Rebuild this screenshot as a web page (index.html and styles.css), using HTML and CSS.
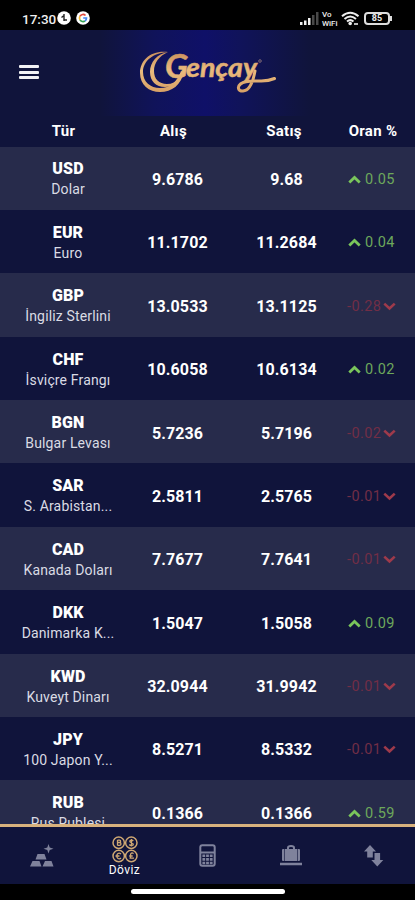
FILE: index.html
```
<!DOCTYPE html>
<html lang="tr">
<head>
    <meta charset="UTF-8">
    <meta name="viewport" content="width=device-width, initial-scale=1.0">
    <title>Gençay - Döviz</title>
    <link rel="stylesheet" href="styles.css">
</head>
<body>
    <svg class="defs" width="0" height="0">
        <symbol id="up" viewBox="0 0 12 8"><path d="M1.2 6.700 6 2.200l4.800 4.500" fill="none" stroke="currentColor" stroke-width="2.600"/></symbol>
        <symbol id="down" viewBox="0 0 12 8"><path d="M1.200 1.300 6 5.800l4.800-4.500" fill="none" stroke="currentColor" stroke-width="2.400"/></symbol>
    </svg>

    <div class="status-bar">
        <span class="time">17:30</span>
        <svg class="status-apps" width="34" height="14" viewBox="0 0 34 14">
            <circle cx="7" cy="7" r="6.800" fill="#fff"/>
            <path d="M7 3v7M4.500 6.500 7 4.500v4M7 9h3" fill="none" stroke="#222" stroke-width="1.400"/>
            <circle cx="26" cy="7" r="6.800" fill="#fff"/>
            <g fill="none" stroke-width="1.700">
                <path d="M28.500 4.500A3.500 3.500 0 0 0 23 5.200" stroke="#e2483c"/>
                <path d="M23 5.200a3.500 3.500 0 0 0 0 3.600" stroke="#f2b62d"/>
                <path d="M23 8.800a3.500 3.500 0 0 0 5 1.200" stroke="#36a455"/>
                <path d="M28 10a3.500 3.500 0 0 0 1.500-3H26.200" stroke="#4385f0"/>
            </g>
        </svg>
        <div class="status-right">
            <svg width="20" height="13" viewBox="0 0 20 13">
                <g fill="#f2f2f2"><rect x="0" y="10" width="2.500" height="3"/><rect x="4" y="8.500" width="2.500" height="4.500"/><rect x="8" y="6" width="2.500" height="7"/></g>
                <g fill="#494949"><rect x="12" y="3" width="2.500" height="10"/><rect x="16" y="0" width="2.500" height="13"/></g>
            </svg>
            <span class="vowifi">Vo<br>WiFi</span>
            <svg class="wifi" width="19" height="15" viewBox="0 0 19 15">
                <g fill="none" stroke="#eee" stroke-width="2">
                    <path d="M1 5.200Q9.200-1.800 17.500 5.200M3.500 8Q9.200 3 15 8M6 10.500Q9.200 7.800 12.500 10.500"/>
                    <path d="M13 13h4" stroke-width="1.600"/>
                </g>
                <circle cx="9.200" cy="12.500" r="1.800" fill="#eee"/>
            </svg>
            <span class="battery">85</span>
        </div>
    </div>

    <header class="header">
        <div class="menu"><span></span><span></span><span></span></div>
        <svg class="logo" width="155" height="60" viewBox="0 0 155 60">
            <defs>
                <linearGradient id="gold" x1="0" y1="0" x2="0" y2="60" gradientUnits="userSpaceOnUse">
                    <stop offset="0.200" stop-color="#c98f5c"/>
                    <stop offset="0.500" stop-color="#e9bb7e"/>
                    <stop offset="0.850" stop-color="#d9a267"/>
                </linearGradient>
            </defs>
            <!-- double crescent -->
            <g fill="url(#gold)">
                <path d="M38 12C21 10 10 20 10 33c0 12 9 19 20 19 12 0 21-7 24-20l-3-1c-4 11-11 17-21 17-9.500 0-17-6-17-16 0-11 10-19 25-20z"/>
                <path d="M38 12c-11 2-18 10-18 20 0 9 6 15 15 15 7 0 13-3 16-8l-2-1c-3 4-7 6-12 6-8 0-13-5-13-13 0-8 5-15 14-19z"/>
            </g>
            <path d="M125 31c-2 11-5 19.500-12 20-5 .2-6-4-2.500-7C115 40 122 41 130 41c6 .2 11-1 14.500-2.500" fill="none" stroke="url(#gold)" stroke-width="3" stroke-linecap="round"/>
            <g class="logo-text" fill="url(#gold)">
                <text x="35" y="38" font-size="33" textLength="23" lengthAdjust="spacingAndGlyphs">G</text>
                <text x="56" y="37" font-size="27" textLength="71" lengthAdjust="spacingAndGlyphs">ençay</text>
            </g>
            <circle cx="130" cy="21" r="1.300" fill="none" stroke="#a98a83" stroke-width=".7"/>
        </svg>
    </header>

    <table class="rates">
        <thead>
            <tr><th>Tür</th><th>Alış</th><th>Satış</th><th>Oran %</th></tr>
        </thead>
        <tbody>
            <tr>
                <td><b>USD</b><span>Dolar</span></td>
                <td>9.6786</td><td>9.68</td>
                <td class="up"><svg><use href="#up"/></svg>0.05</td>
            </tr>
            <tr>
                <td><b>EUR</b><span>Euro</span></td>
                <td>11.1702</td><td>11.2684</td>
                <td class="up"><svg><use href="#up"/></svg>0.04</td>
            </tr>
            <tr>
                <td><b>GBP</b><span>İngiliz Sterlini</span></td>
                <td>13.0533</td><td>13.1125</td>
                <td class="down">-0.28<svg><use href="#down"/></svg></td>
            </tr>
            <tr>
                <td><b>CHF</b><span>İsviçre Frangı</span></td>
                <td>10.6058</td><td>10.6134</td>
                <td class="up"><svg><use href="#up"/></svg>0.02</td>
            </tr>
            <tr>
                <td><b>BGN</b><span>Bulgar Levası</span></td>
                <td>5.7236</td><td>5.7196</td>
                <td class="down">-0.02<svg><use href="#down"/></svg></td>
            </tr>
            <tr>
                <td><b>SAR</b><span>S. Arabistan...</span></td>
                <td>2.5811</td><td>2.5765</td>
                <td class="down">-0.01<svg><use href="#down"/></svg></td>
            </tr>
            <tr>
                <td><b>CAD</b><span>Kanada Doları</span></td>
                <td>7.7677</td><td>7.7641</td>
                <td class="down">-0.01<svg><use href="#down"/></svg></td>
            </tr>
            <tr>
                <td><b>DKK</b><span>Danimarka K...</span></td>
                <td>1.5047</td><td>1.5058</td>
                <td class="up"><svg><use href="#up"/></svg>0.09</td>
            </tr>
            <tr>
                <td><b>KWD</b><span>Kuveyt Dinarı</span></td>
                <td>32.0944</td><td>31.9942</td>
                <td class="down">-0.01<svg><use href="#down"/></svg></td>
            </tr>
            <tr>
                <td><b>JPY</b><span>100 Japon Y...</span></td>
                <td>8.5271</td><td>8.5332</td>
                <td class="down">-0.01<svg><use href="#down"/></svg></td>
            </tr>
            <tr>
                <td><b>RUB</b><span>Rus Rublesi</span></td>
                <td>0.1366</td><td>0.1366</td>
                <td class="up"><svg><use href="#up"/></svg>0.59</td>
            </tr>
        </tbody>
    </table>

    <nav class="tabs">
        <a class="tab">
            <svg width="24" height="24" viewBox="0 0 24 24" fill="currentColor">
                <path d="M7.500 10h7l2 5.500H5.500zM2.500 17h7l2 5.500H0zM15 17h6.500l2 5.500H12.500zM18.500 0l1.200 3.500 3.800 1.200-3.800 1.200-1.200 3.600-1.200-3.600-3.800-1.200 3.800-1.200z"/>
            </svg>
        </a>
        <a class="tab active">
            <svg width="26" height="27" viewBox="0 0 26 27" fill="#11143b" stroke="#cfa873" stroke-width="1.500">
                <circle cx="6.700" cy="6.800" r="5.700"/><circle cx="19.300" cy="6.800" r="5.700"/>
                <circle cx="6.700" cy="20" r="5.700"/><circle cx="19.300" cy="20" r="5.700"/>
                <g fill="none" stroke-width="1.300">
                    <path d="M5.500 4v5.500M5.500 4.200h2c1.500 0 1.500 2.300 0 2.300h-2 2c2 0 2 2.800 0 2.800h-2"/>
                    <path d="M21.300 5c-1-1.200-3.500-1-3.500.5s3.500 1 3.500 2.700-3 1.600-4 .3M19.500 3v7.500"/>
                    <path d="M9 18c-2.500-2-4.200 0-4.200 2s2 4 4.200 2M3.500 20h4"/>
                    <path d="M21.500 17.700c-1.500-1.500-3-.5-3 1.200v3.300h-1 4.500M17.200 20h3.500"/>
                </g>
            </svg>
            <span>Döviz</span>
        </a>
        <a class="tab">
            <svg width="18" height="24" viewBox="0 0 18 24">
                <rect x="1.300" y="1.300" width="14.400" height="20.400" rx="2" fill="none" stroke="currentColor" stroke-width="2"/>
                <path d="M1.500 8.500h14" stroke="currentColor" stroke-width="2"/>
                <path d="M4.800 10.500v11M8.500 10.500v11M12.200 10.500v11" stroke="currentColor" stroke-width="2.800" stroke-dasharray="2.600 1"/>
            </svg>
        </a>
        <a class="tab">
            <svg width="24" height="24" viewBox="0 0 24 24" fill="currentColor">
                <path d="M9 5.500V3.800Q9 2 12 2t3 1.800v1.700" fill="none" stroke="currentColor" stroke-width="2"/>
                <path d="M4 5h1.200v12H4q-1 0-1-1V6q0-1 1-1zM5.800 5h12.400v12H5.800zM18.800 5H20q1 0 1 1v10q0 1-1 1h-1.200zM1 18.800h22v2.400H1z"/>
            </svg>
        </a>
        <a class="tab">
            <svg width="22" height="24" viewBox="0 0 22 24" fill="currentColor">
                <path d="M7 1l6 6.500H9.800V13.500H4.200V7.500H1zM14.300 22.500l-6-6.500h3.200v-7h5.600v7h3.200z"/>
            </svg>
        </a>
    </nav>
    <div class="home"><i></i></div>
</body>
</html>
```

FILE: styles.css
```
body {
    margin: 0;
    height: 900px;
    display: flex;
    flex-direction: column;
    overflow: hidden;
    background: #10143b;
    color: #fff;
    font-family: Roboto, sans-serif;
}

.defs {
    position: absolute;
}

/* status bar */
.status-bar {
    flex: none;
    box-sizing: border-box;
    height: 30px;
    padding: 8px 25px 0 22px;
    display: flex;
    align-items: center;
    background: #000;
    color: #eee;
}

.time {
    width: 35px;
    font-size: 13.5px;
    font-weight: 500;
}

.status-apps {
    margin-top: -2px;
}

.status-right {
    margin-left: auto;
    display: flex;
    align-items: center;
}

.status-right svg {
    margin-top: -2px;
}

.vowifi {
    width: 17px;
    margin: -1px 2px 0 2px;
    font-size: 8px;
    line-height: 9px;
    font-weight: 500;
}

.battery {
    position: relative;
    box-sizing: border-box;
    width: 26px;
    height: 13px;
    margin: -1px 0 0 4px;
    border: 2px solid #ddd;
    border-radius: 4px;
    font-size: 9px;
    line-height: 9px;
    font-weight: 700;
    text-align: center;
}

.battery::after {
    content: "";
    position: absolute;
    right: -4px;
    top: 2px;
    width: 2px;
    height: 5px;
    background: #ddd;
}

/* header */
.header {
    flex: none;
    height: 86px;
    display: flex;
    align-items: flex-start;
    background: linear-gradient(90deg, #10143b 100px, #10135a 155px, #0f1068 205px, #10135a 240px, #10143b 310px);
}

.menu {
    width: 20px;
    margin: 35px 91px 0 19px;
}

.menu span {
    display: block;
    height: 3px;
    margin-bottom: 2.5px;
    border-radius: 1px;
    background: #f2f2f5;
}

.logo {
    margin-top: 10px;
}

.logo-text {
    font-family: Lato, sans-serif;
    font-style: italic;
    font-weight: 700;
    stroke: url(#gold);
    stroke-width: 0.5px;
}

/* rates */
.rates {
    flex: 1;
    min-height: 0;
    overflow: hidden;
    display: block;
    border-spacing: 0;
}

.rates tr {
    display: grid;
    grid-template-columns: 136px 83px 135px 61px;
    align-items: center;
    height: 63.4px;
}

.rates thead tr {
    grid-template-columns: 127px 93px 128px 50px;
    height: 30.5px;
}

.rates tbody tr:nth-child(odd) {
    background: #272b4b;
}

.rates th,
.rates td {
    padding: 0;
    text-align: center;
    white-space: nowrap;
    font-size: 16px;
    font-weight: 700;
}

.rates td {
    padding-top: 2.5px;
    letter-spacing: 0.1px;
}

.rates th {
    font-size: 15px;
    letter-spacing: 0.3px;
}

.rates td b,
.rates td span {
    display: block;
}

.rates td b {
    line-height: 20px;
}

.rates td span {
    font-size: 14px;
    line-height: 20px;
    font-weight: 400;
    letter-spacing: 0.15px;
    color: #dadbe4;
}

.rates .up,
.rates .down {
    display: flex;
    align-items: center;
    font-size: 14.5px;
    font-weight: 400;
    letter-spacing: 0.4px;
}

.rates .up {
    margin-left: -6px;
    gap: 4px;
    color: #6da85b;
}

.rates .down {
    margin-left: -7px;
    gap: 2px;
    color: #712e46;
}

.rates td svg {
    width: 13px;
    height: 9px;
}

.up svg {
    color: #7ac65b;
}

.down svg {
    color: #9e3a4b;
}

/* bottom tabs */
.tabs {
    flex: none;
    height: 57px;
    display: flex;
    border-top: 3px solid #d8b27d;
    color: #7f829c;
}

.tab {
    flex: 1;
    display: flex;
    flex-direction: column;
    align-items: center;
    justify-content: center;
}

.tab span {
    font-size: 12px;
    line-height: 14px;
    font-weight: 400;
    letter-spacing: 0.4px;
    color: #fff;
}

.tab.active {
    padding-top: 2px;
}

.home {
    flex: none;
    height: 16px;
    background: #000;
}

.home i {
    display: block;
    width: 154px;
    height: 5px;
    margin: 5px auto 0;
    border-radius: 3px;
    background: #fff;
}
```
